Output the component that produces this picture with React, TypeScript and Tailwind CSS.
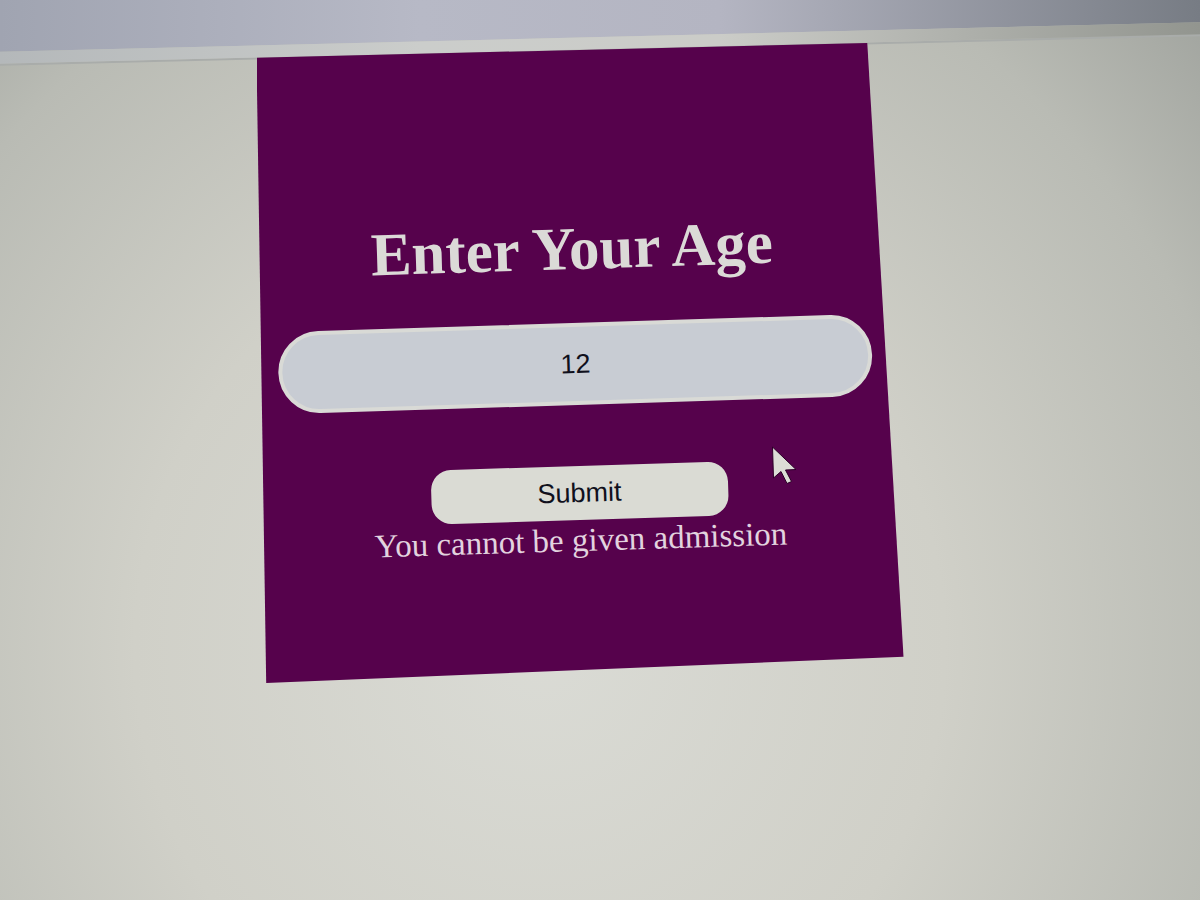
import React, { useState } from "react";

const PointerIcon = () => {
  return (
    <svg
      viewBox="0 0 26 40"
      aria-hidden="true"
      className="absolute left-[514px] top-[402px] w-[26px] h-10 pointer-events-none"
    >
      <path
        d="M1.500 2 L2.500 33 L10 26.500 L16 38.500 L20.500 36.500 L14.500 25 L25 24.500 Z"
        fill="#dcddd6"
        stroke="#2c0028"
        strokeWidth="1"
        strokeLinejoin="round"
      />
    </svg>
  );
};

const TopBar = () => {
  return (
    <header className="flex flex-col h-[67px] -mt-4 -skew-y-[1.4deg] border-b-2 border-[#a9acaa]">
      <div className="flex-1 bg-[linear-gradient(to_right,#a0a4b1,#b7b9c6_35%,#b4b5c2_60%,#777c84)]" />
      <div className="h-3 bg-[linear-gradient(to_right,#b4b8ba,#cbcdcb_35%,#cbccc8_60%,#92958f)]" />
    </header>
  );
};

const AgeForm = () => {
  const [age, setAge] = useState("12");
  const [message, setMessage] = useState("You cannot be given admission");

  const handleSubmit = (e: React.FormEvent) => {
    e.preventDefault();
    setMessage(
      Number(age) >= 18
        ? "You can be given admission"
        : "You cannot be given admission"
    );
  };

  return (
    <form
      onSubmit={handleSubmit}
      className="w-[93%] flex flex-col items-center -rotate-[1.8deg]"
    >
      <h1 className="font-['Liberation_Serif',serif] text-[61px] leading-[60px] font-bold text-[#dbdad7] whitespace-nowrap">
        <label htmlFor="age">Enter Your Age</label>
      </h1>
      <input
        id="age"
        type="text"
        inputMode="numeric"
        value={age}
        onChange={(e) => setAge(e.target.value)}
        className="mt-11 w-full h-[82px] rounded-full border-4 border-[#d9dad6] bg-[#c8ccd3] text-center font-['Liberation_Sans',sans-serif] text-[27px] text-[#10101c] outline-none"
      />
      <button
        type="submit"
        className="mt-[61px] w-1/2 h-[54px] rounded-[20px] bg-[#dadbd4] font-['Liberation_Sans',sans-serif] text-[27px] text-[#10101c]"
      >
        Submit
      </button>
      <p className="mt-0.5 font-['Liberation_Serif',serif] text-[33px] leading-9 text-[#e2d3df] whitespace-nowrap">
        {message}
      </p>
    </form>
  );
};

const App = () => {
  return (
    <div className="min-h-screen overflow-hidden bg-[radial-gradient(ellipse_75%_105%_at_45%_72%,#dadbd5,#d0d0c8_45%,#b9bbb4_80%,#8f938f_115%)]">
      <TopBar />
      <main className="-mt-2 pr-10 flex justify-center">
        <section className="relative w-[647px] max-w-full pt-44 pb-[125px] pr-2 flex justify-center bg-[#56024c] [clip-path:polygon(0%_2.3%,94.4%_0%,100%_95.9%,1.5%_100%)]">
          <AgeForm />
          <PointerIcon />
        </section>
      </main>
    </div>
  );
};

export default App;
